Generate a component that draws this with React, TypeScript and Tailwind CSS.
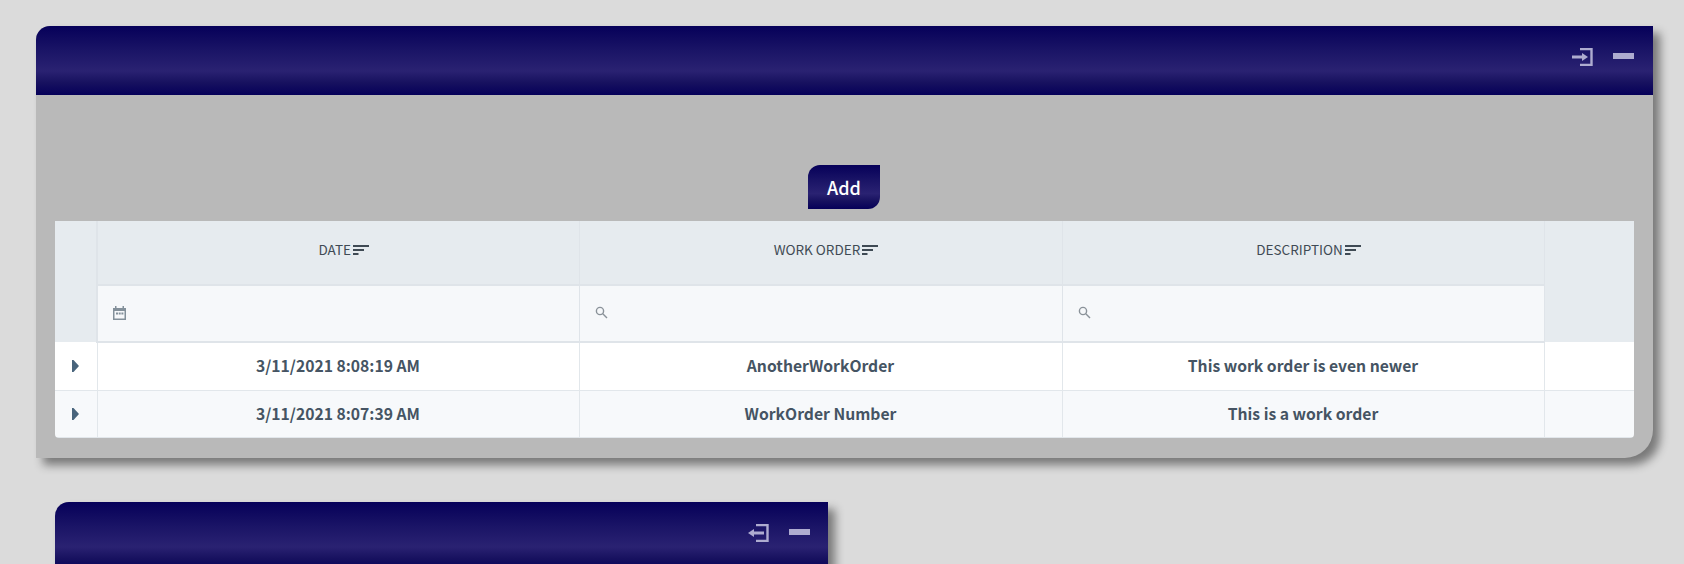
import React from "react";

const bar = "bg-[linear-gradient(to_bottom,#060059_0%,#1a1466_35%,#2a2272_65%,#17115f_82%,#060059_100%)]";

function LoginIcon({ flip }: { flip?: boolean }) {
  return (
    <svg width="21" height="18" viewBox="0 0 21 18" className="shrink-0">
      <path d="M8 1H19.500V17H8" fill="none" stroke="#aeacd0" strokeWidth="2.400" />
      {flip ? (
        <path d="M16 7.500H6V5L0 9L6 13V10.500H16Z" fill="#aeacd0" />
      ) : (
        <path d="M0 7.500H10V5L16 9L10 13V10.500H0Z" fill="#aeacd0" />
      )}
    </svg>
  );
}

function WindowBar({ flip, className }: { flip?: boolean; className: string }) {
  return (
    <div className={`flex items-start justify-end ${bar} ${className}`}>
      <LoginIcon flip={flip} />
      <div className="ml-[20px] mt-[5px] h-[6px] w-[21px] bg-[#aeacd0]" />
    </div>
  );
}

function SortIcon() {
  return (
    <svg width="16" height="10" viewBox="0 0 16 10" className="mt-[1px] shrink-0">
      <path d="M0 0H16V2H0ZM0 4H11V6H0ZM0 8H5.500V10H0Z" fill="#3f4a54" />
    </svg>
  );
}

function SearchIcon() {
  return (
    <svg width="13" height="13" viewBox="0 0 13 13" fill="none" stroke="#8a9299" strokeWidth="1.400">
      <circle cx="5" cy="5" r="3.600" />
      <path d="M7.800 7.800L12 12" />
    </svg>
  );
}

function CalendarIcon() {
  return (
    <svg width="13" height="14" viewBox="0 0 13 14">
      <path d="M2 0H3.500V2H9.500V0H11V2H13V14H0V2H2ZM1.500 5V12.500H11.500V5Z" fill="#83909a" />
      <path d="M3 6.500H5V8.500H3ZM5.700 6.500H7.700V8.500H5.700ZM8.400 6.500H10.400V8.500H8.400Z" fill="#83909a" />
    </svg>
  );
}

function Caret() {
  return (
    <svg width="7" height="12" viewBox="0 0 7 12" className="mx-auto block">
      <path d="M0 0H1.500L7 6L1.500 12H0Z" fill="#48647c" />
    </svg>
  );
}

const rows = [
  { date: "3/11/2021 8:08:19 AM", order: "AnotherWorkOrder", description: "This work order is even newer", bg: "bg-white", height: "h-[48px]" },
  { date: "3/11/2021 8:07:39 AM", order: "WorkOrder Number", description: "This is a work order", bg: "bg-[#f7f9fb]", height: "h-[47px]" },
];

const headers = ["DATE", "WORK ORDER", "DESCRIPTION"];

function App() {
  return (
    <div className="h-[564px] overflow-hidden bg-[#dbdbdb] pt-[26px] pl-[36px] pr-[31px] font-['Noto_Sans_CJK_SC','Source_Sans_Pro',sans-serif]">
      <div className="h-[432px] overflow-hidden rounded-tl-[14px] rounded-br-[28px] bg-[#b9b9b9] shadow-[7px_7px_10px_rgba(0,0,0,0.45)]">
        <WindowBar className="h-[69px] pt-[22px] pr-[19px]" />
        <div className="flex justify-center pt-[70px] pr-[2px]">
          <button className={`h-[44px] w-[72px] rounded-tl-[12px] rounded-br-[12px] pl-[1px] text-[18px] font-medium leading-[41px] text-white ${bar}`}>
            Add
          </button>
        </div>
        <div className="mx-[19px] mt-[12px] overflow-hidden rounded-b-[4px]">
          <table className="w-[1579px] table-fixed border-collapse text-center text-[#3f4a54]">
            <colgroup>
              <col className="w-[42px]" />
              <col className="w-[482px]" />
              <col className="w-[483px]" />
              <col className="w-[482px]" />
              <col className="w-[90px]" />
            </colgroup>
            <thead>
              <tr className="h-[64px] bg-[#e6ebef]">
                <th rowSpan={2} className="border-r-2 border-[#dfe4e9]" />
                {headers.map((label) => (
                  <th key={label} className="border-r border-b-2 border-[#dfe4e9] p-0 pb-[7px] pl-[11px] font-normal">
                    <div className="flex items-center justify-center gap-[2px] text-[13.5px] leading-[20px]">
                      {label}
                      <SortIcon />
                    </div>
                  </th>
                ))}
                <th rowSpan={2} />
              </tr>
              <tr className="h-[57px] bg-[#f6f8fa]">
                <td className="border-r border-b-2 border-[#dfe4e9] pb-[2px] pl-[15px] text-left">
                  <CalendarIcon />
                </td>
                <td className="border-r border-b-2 border-[#dfe4e9] pb-[2px] pl-[15px] text-left">
                  <SearchIcon />
                </td>
                <td className="border-r border-b-2 border-[#dfe4e9] pb-[2px] pl-[15px] text-left">
                  <SearchIcon />
                </td>
              </tr>
            </thead>
            <tbody>
              {rows.map((row) => (
                <tr key={row.date} className={`${row.bg} ${row.height} border-b border-[#e2e7eb] text-[15.7px] font-bold text-[#455463]`}>
                  <td className="border-r border-[#e2e7eb]">
                    <Caret />
                  </td>
                  <td className="border-r border-[#e2e7eb]">{row.date}</td>
                  <td className="border-r border-[#e2e7eb]">{row.order}</td>
                  <td className="border-r border-[#e2e7eb]">{row.description}</td>
                  <td />
                </tr>
              ))}
            </tbody>
          </table>
        </div>
      </div>
      <div className="ml-[19px] mt-[44px] h-[120px] w-[773px] rounded-tl-[14px] bg-[#b9b9b9] shadow-[7px_7px_10px_rgba(0,0,0,0.45)]">
        <WindowBar flip className="h-[69px] rounded-tl-[14px] pt-[22px] pr-[18px]" />
      </div>
    </div>
  );
}

export default App;
